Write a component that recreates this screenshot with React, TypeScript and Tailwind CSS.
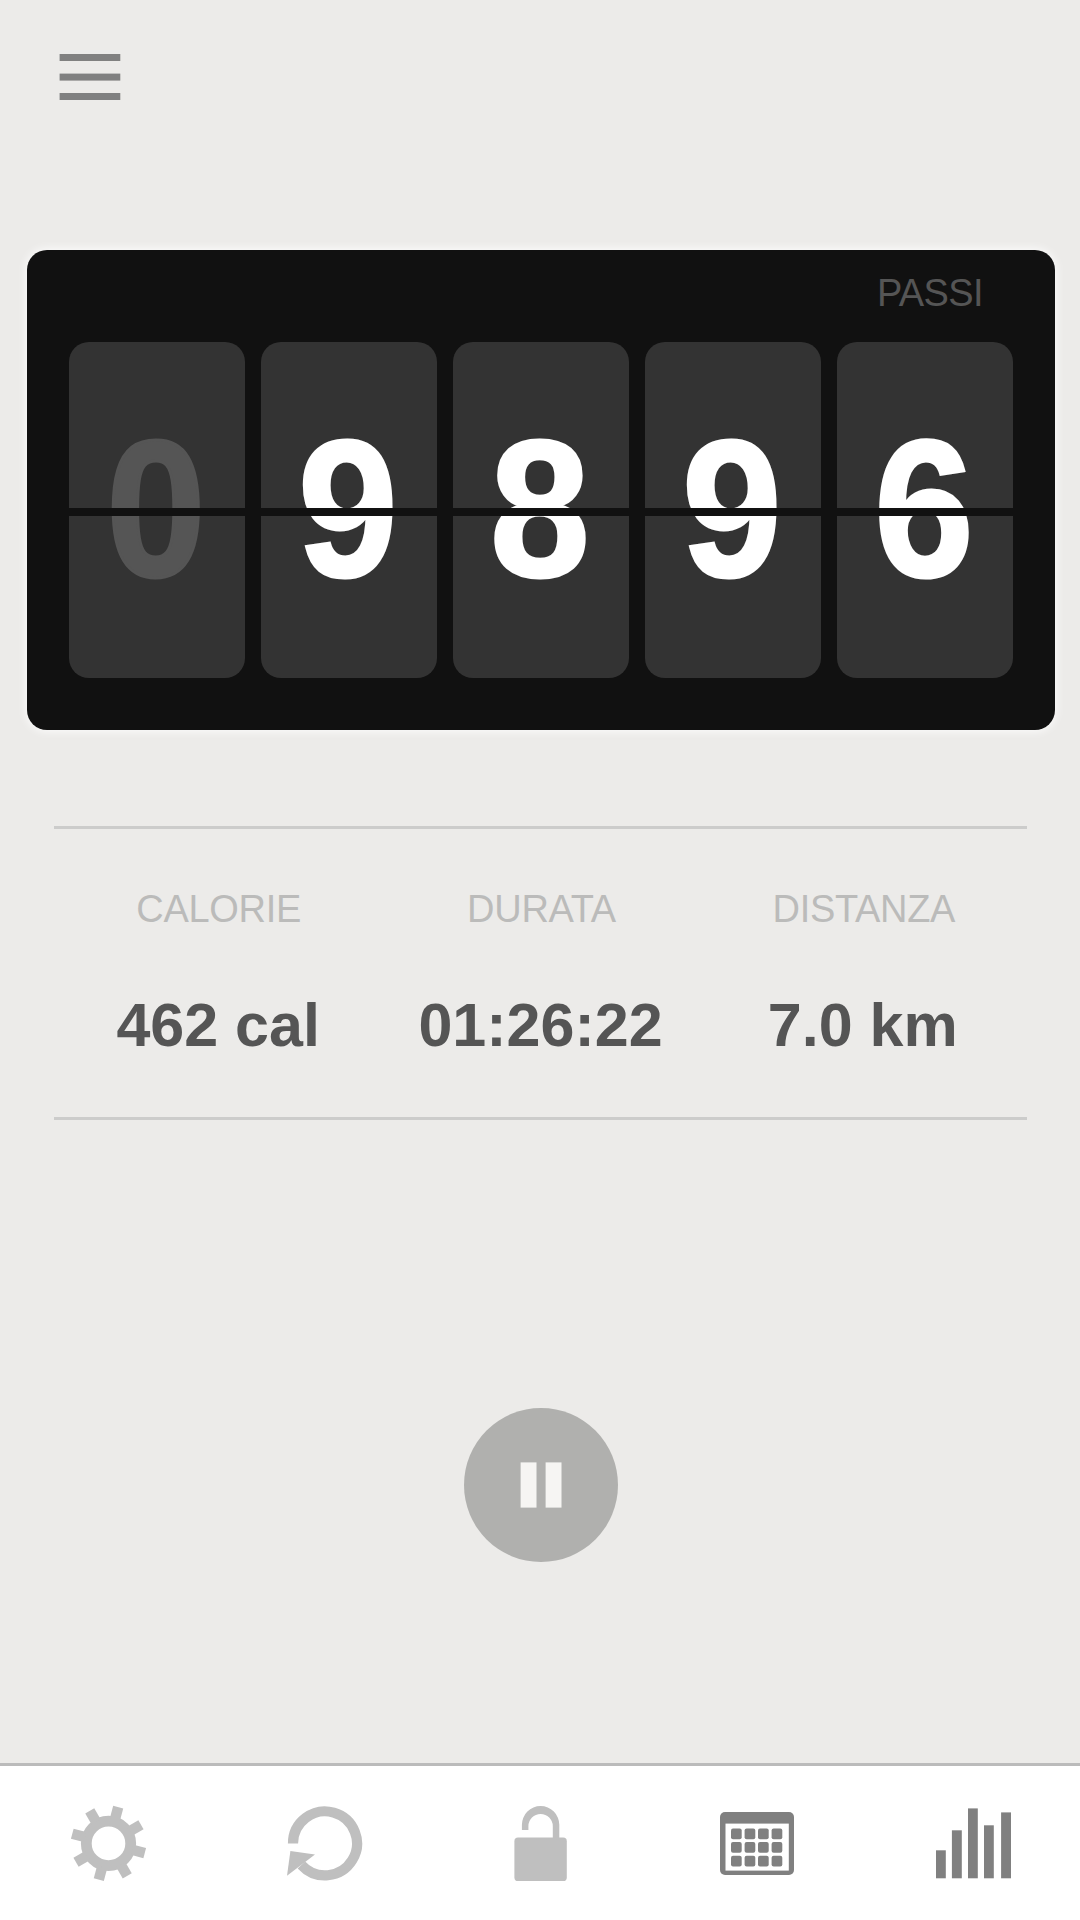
import React from 'react'

const digits = ['0', '9', '8', '9', '6']

const stats = [
  { label: 'CALORIE', value: '462 cal', labelClass: 'pl-[5px]', valueClass: 'pl-[4px]' },
  { label: 'DURATA', value: '01:26:22', labelClass: 'pl-[2px]', valueClass: '' },
  { label: 'DISTANZA', value: '7.0 km', labelClass: 'pr-[2px]', valueClass: 'pr-[4px]' },
]

const calendarRows = [25.4, 39, 52.7]
const calendarColumns = [15, 28.6, 42, 55.6]
const toothAngles = [15, 60, 105, 150, 195, 240, 285, 330]

function Digit({ value, dim }: { value: string; dim: boolean }) {
  return (
    <div className="relative h-[336px] w-[176px] rounded-[20px] bg-[#333333]">
      <div
        className={`h-[333px] pr-[2px] text-center text-[194px] font-bold leading-[333px] ${dim ? 'text-[#555555]' : 'text-white'}`}
      >
        <span className="inline-block scale-x-[0.925] [-webkit-text-stroke:3px_currentColor]">{value}</span>
      </div>
      {/* flip hinge */}
      <div className="absolute inset-x-0 top-[166px] h-2 bg-[#111111]" />
    </div>
  )
}

function GearIcon() {
  return (
    <svg className="h-20 w-20" viewBox="0 0 80 80" fill="#bfbfbf" aria-hidden="true">
      <circle cx="40.5" cy="40.4" r="22.2" fill="none" stroke="#bfbfbf" strokeWidth="10.8" />
      {toothAngles.map((angle) => (
        <rect key={angle} x="35.3" y="2.9" width="10.4" height="13" transform={`rotate(${angle} 40.5 40.4)`} />
      ))}
    </svg>
  )
}

function RestartIcon() {
  return (
    <svg className="h-20 w-20" viewBox="0 0 80 80" fill="#bfbfbf" aria-hidden="true">
      <path d="M9 40.4A32 32 0 1 1 17.4 62" fill="none" stroke="#bfbfbf" strokeWidth="10.2" />
      <path d="M6.4 48L31 51.4L3 72.8Z" />
    </svg>
  )
}

function UnlockIcon() {
  return (
    <svg className="h-20 w-20" viewBox="0 0 80 80" fill="#bfbfbf" aria-hidden="true">
      <rect x="14.4" y="34.6" width="52.4" height="43.4" rx="3.6" />
      <path d="M21.9 27V21.8A18.7 18.7 0 0 1 59.3 21.8V36H52.8V23.2A12.2 12.2 0 0 0 28.4 23.2V27Z" />
    </svg>
  )
}

function CalendarIcon() {
  return (
    <svg className="h-20 w-20" viewBox="0 0 80 80" fill="#808080" aria-hidden="true">
      <rect x="4" y="9" width="74" height="63" rx="5" />
      <rect x="9.5" y="20.6" width="63.3" height="47" fill="#ffffff" />
      {calendarRows.map((y) =>
        calendarColumns.map((x) => <rect key={`${x}-${y}`} x={x} y={y} width="10.7" height="10.8" rx="2" />),
      )}
    </svg>
  )
}

function ChartIcon() {
  return (
    <svg className="h-20 w-20" viewBox="0 0 80 80" fill="#808080" aria-hidden="true">
      <rect x="4" y="47.3" width="9.8" height="28" />
      <rect x="19.9" y="27.3" width="9.9" height="48" />
      <rect x="36" y="5.4" width="9.8" height="69.9" />
      <rect x="52" y="22.3" width="9.8" height="53" />
      <rect x="69.1" y="9.4" width="9.9" height="65.9" />
    </svg>
  )
}

const tabs = [
  { name: 'settings', icon: <GearIcon /> },
  { name: 'restart', icon: <RestartIcon /> },
  { name: 'unlock', icon: <UnlockIcon /> },
  { name: 'calendar', icon: <CalendarIcon /> },
  { name: 'chart', icon: <ChartIcon /> },
]

export default function App() {
  return (
    <div className="flex h-[1920px] w-[1080px] flex-col overflow-hidden bg-[#ecebe9] font-['Liberation_Sans',Arial,sans-serif]">
      <header className="h-[250px] pl-[59px] pt-[54px]">
        <button type="button" className="block" aria-label="Menu">
          <svg className="h-[46px] w-[62px]" viewBox="0 0 62 46" fill="#808080">
            <rect x="0.6" y="0" width="60.7" height="7" />
            <rect x="0.6" y="19.6" width="60.7" height="7" />
            <rect x="0.6" y="39" width="60.7" height="7" />
          </svg>
        </button>
      </header>

      <section className="ml-[27px] h-[480px] w-[1028px] rounded-[20px] bg-[#111111] px-[42px] shadow-[0_0_10px_1px_rgba(255,255,255,0.9)]">
        <div className="h-[92px] pr-[30px] pt-[21px] text-right text-[38px] leading-[44px] tracking-[-0.6px] text-[#555555]">
          PASSI
        </div>
        <div className="flex gap-4">
          {digits.map((value, index) => (
            <Digit key={index} value={value} dim={index === 0} />
          ))}
        </div>
      </section>

      <section className="ml-[54px] mt-24 grid h-[294px] w-[973px] grid-cols-3 border-y-[3px] border-[#cccccb] text-center">
        {stats.map((stat) => (
          <div key={stat.label}>
            <div className={`mt-[58px] text-[38px] leading-[44px] tracking-[-0.3px] text-[#bbbbba] ${stat.labelClass}`}>
              {stat.label}
            </div>
            <div className={`mt-[59px] text-[61px] font-bold leading-[70px] text-[#555555] ${stat.valueClass}`}>
              {stat.value}
            </div>
          </div>
        ))}
      </section>

      <div className="flex flex-1 pl-[464px] pt-[288px]">
        <button
          type="button"
          className="flex h-[154px] w-[154px] items-center justify-center rounded-full bg-[#b0b0ae]"
          aria-label="Pause"
        >
          <svg className="h-[46px] w-[42px]" viewBox="0 0 42 46" fill="#f6f5f3">
            <rect x="0.6" y="0.4" width="15.9" height="45.2" />
            <rect x="25.6" y="0.4" width="15.9" height="45.2" />
          </svg>
        </button>
      </div>

      <nav className="grid h-[157px] grid-cols-5 border-t-[3px] border-[#bbbbbb] bg-white">
        {tabs.map((tab) => (
          <button key={tab.name} type="button" className="flex items-center justify-center" aria-label={tab.name}>
            {tab.icon}
          </button>
        ))}
      </nav>
    </div>
  )
}
